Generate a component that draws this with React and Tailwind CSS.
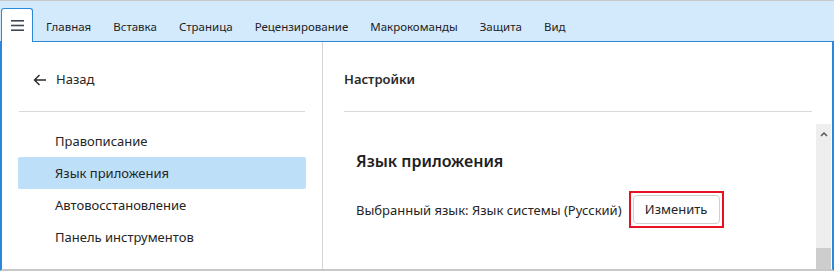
import React from "react";

const tabs = ["Главная", "Вставка", "Страница", "Рецензирование", "Макрокоманды", "Защита", "Вид"];
const items = ["Правописание", "Язык приложения", "Автовосстановление", "Панель инструментов"];

export default function App() {
  return (
    <div
      className="w-[834px] h-[271px] flex flex-col overflow-hidden bg-white border-t border-[#c8c8c8] text-[#252525]"
      style={{ fontFamily: '"Noto Sans", "Open Sans", sans-serif' }}
    >
      {/* Tab bar */}
      <div className="h-[41px] shrink-0 bg-[#d3e9fc] border-b border-[#2b88d8] flex items-end relative">
        <div className="w-[32px] h-[34px] ml-[1px] mb-[-1px] bg-white border border-b-0 border-[#2b88d8] rounded-t-[3px] flex items-center justify-center">
          <svg width="13" height="11" viewBox="0 0 13 11">
            <rect x="0" y="0" width="13" height="1.6" fill="#3d4a55" />
            <rect x="0" y="4.7" width="13" height="1.6" fill="#3d4a55" />
            <rect x="0" y="9.4" width="13" height="1.6" fill="#3d4a55" />
          </svg>
        </div>
        <div className="flex h-full items-center pt-[12px] ml-[2px] text-[11.5px] text-[#1e1e1e]">
          {tabs.map((t) => (
            <div key={t} className="px-[11px] leading-none">{t}</div>
          ))}
        </div>
      </div>

      {/* Body */}
      <div className="flex-1 flex border-l-2 border-r-2 border-[#2b88d8] border-b-2 border-b-[#c8c8c8] min-h-0">
        {/* Left panel */}
        <div className="w-[321px] shrink-0 border-r border-[#d4d4d4] flex flex-col">
          <div className="h-[70px] mx-[17px] border-b border-[#d9d9d9] flex items-center pt-[6px] gap-[9px] pl-[14px]">
            <svg width="14" height="12" viewBox="0 0 14 12" fill="none" stroke="#2a2a2a" strokeWidth="1.4">
              <path d="M13 6H1.5M6.5 1L1.5 6l5 5" />
            </svg>
            <span className="text-[13px]">Назад</span>
          </div>
          <div className="pt-[13px] pl-[16px] pr-[16px] flex flex-col">
            {items.map((it, i) => (
              <div
                key={it}
                className={`h-[32px] flex items-center pt-[2px] pl-[37px] text-[13px] rounded-[2px] ${i === 1 ? "bg-[#bde0f8]" : ""}`}
              >
                {it}
              </div>
            ))}
          </div>
        </div>

        {/* Right panel */}
        <div className="flex-1 flex flex-col min-w-0">
          <div className="h-[70px] ml-[21px] mr-[20px] border-b border-[#d9d9d9] flex items-center pt-[6px]">
            <span className="text-[13px] font-semibold text-[#2a2a2a]">Настройки</span>
          </div>
          <div className="flex-1 flex min-h-0 mt-[12px]">
            <div className="flex-1 pl-[33px] pt-[29px]">
              <div className="text-[16px] font-semibold leading-none text-[#1e1e1e]">Язык приложения</div>
              <div className="flex items-center mt-[22px]">
                <span className="text-[13px] pt-[3px]">Выбранный язык: Язык системы (Русский)</span>
                <div className="ml-[7px] border-2 border-[#e81123] p-[2px]">
                  <div className="w-[87px] h-[29px] border border-[#d0d0d0] rounded-[4px] flex items-center justify-center text-[13px] bg-white">
                    Изменить
                  </div>
                </div>
              </div>
            </div>
            <div className="w-[15px] mr-[1px] bg-[#eeeeee] flex flex-col justify-between">
              <div className="h-[20px] flex items-center justify-center">
                <svg width="8" height="6" viewBox="0 0 8 6" fill="none" stroke="#555" strokeWidth="1.5">
                  <path d="M1 5L4 2l3 3" />
                </svg>
              </div>
              <div className="h-[21px] bg-[#cdcdcd]" />
            </div>
          </div>
        </div>
      </div>
    </div>
  );
}
